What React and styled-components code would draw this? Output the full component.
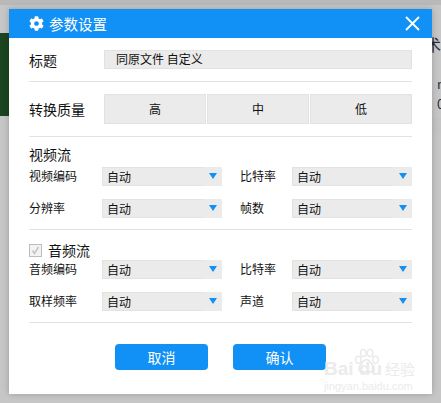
import React from "react";
import styled, { createGlobalStyle } from "styled-components";
import { FaCog } from "react-icons/fa";

const Global = createGlobalStyle`
  html, body { margin: 0; padding: 0; }
  body { font-family: "Noto Sans CJK SC", "Noto Sans", sans-serif; color: #111; }
`;

const Page = styled.div`
  position: relative;
  width: 441px;
  height: 403px;
  overflow: hidden;
  box-sizing: border-box;
  padding: 9px 0 0 9px;
  background:
    linear-gradient(#1b4420, #1b4420) 0 33px / 9px 83px no-repeat,
    linear-gradient(#c4c4c4, #c4c4c4) 432px 118px / 9px 17px no-repeat,
    linear-gradient(#b9b9b9 0, #b9b9b9 5px, #c6c6c6 5px, #c6c6c6 100%);
`;

const Ghost = styled.span`
  position: absolute;
  left: ${(p) => p.$left}px;
  top: ${(p) => p.$top}px;
  font-size: ${(p) => p.$size}px;
  line-height: 1;
  color: #2a2a3a;
`;

const Dialog = styled.div`
  position: relative;
  width: 423px;
  height: 385px;
  background: #fff;
  box-shadow: 0 0 6px rgba(0, 0, 0, 0.22);
`;

const Header = styled.header`
  height: 29px;
  background: #1190f5;
  display: flex;
  align-items: center;
  padding: 0 12px 0 20px;
  color: #fff;
`;

const Title = styled.h1`
  margin: 0 0 0 5px;
  font-size: 14.5px;
  font-weight: 400;
  line-height: 29px;
  flex: 1;
`;

const Close = styled.svg`
  width: 15px;
  height: 15px;
  display: block;
`;

const Body = styled.div`
  padding: 12px 20px 0 20px;
`;

const TitleRow = styled.div`
  display: flex;
  align-items: center;
  height: 19px;
`;

const RowLabel = styled.span`
  font-size: 14px;
  line-height: 20px;
  width: 75px;
  flex: none;
`;

const TitleField = styled.div`
  flex: 1;
  height: 19px;
  box-sizing: border-box;
  background: #ebebeb;
  border: 1px solid #e2e2e2;
  font-size: 12px;
  line-height: 16px;
  padding-left: 11px;
  color: #111;
`;

const Divider = styled.div`
  height: 1px;
  background: #e2e2e2;
  margin: ${(p) => p.$top}px 0 ${(p) => p.$bottom}px;
`;

const QualityRow = styled.div`
  display: flex;
  align-items: center;
  height: 30px;
`;

const Segments = styled.div`
  flex: 1;
  display: grid;
  grid-template-columns: repeat(3, 1fr);
  gap: 1px;
  height: 30px;
`;

const Segment = styled.div`
  background: #ebebeb;
  border: 1px solid #e2e2e2;
  font-size: 12px;
  line-height: 28px;
  text-align: center;
  color: #111;
`;

const SectionTitle = styled.div`
  font-size: 14px;
  line-height: 18px;
  height: 20px;
  display: flex;
  align-items: center;
`;

const CheckBox = styled.span`
  width: 13px;
  height: 13px;
  box-sizing: border-box;
  border: 1px solid #bdbdbd;
  background: #f3f3f3;
  margin-right: 6px;
  display: flex;
  align-items: center;
  justify-content: center;
`;

const Grid = styled.div`
  display: grid;
  grid-template-columns: 73px 120px 70px 120px;
  row-gap: 13px;
  margin-top: ${(p) => p.$top}px;
`;

const FieldLabel = styled.span`
  font-size: 12px;
  line-height: 18px;
  color: #111;
  padding-left: ${(p) => (p.$second ? "18px" : "0")};
`;

const Select = styled.div`
  height: 19px;
  background: #ebebeb;
  display: flex;
  align-items: stretch;
`;

const SelectText = styled.div`
  flex: 1;
  box-sizing: border-box;
  border: 1px solid #e2e2e2;
  border-right: none;
  font-size: 12px;
  line-height: 17px;
  padding-left: 4px;
  color: #111;
`;

const Arrow = styled.div`
  width: 19px;
  flex: none;
  display: flex;
  justify-content: center;
  padding-top: 6px;
  box-sizing: border-box;
`;

const Triangle = styled.span`
  width: 0;
  height: 0;
  border-left: 4.5px solid transparent;
  border-right: 4.5px solid transparent;
  border-top: 6px solid #1190f5;
`;

const Actions = styled.div`
  display: flex;
  gap: 25px;
  padding-left: 86px;
`;

const Button = styled.button`
  width: 93px;
  height: 26px;
  padding: 0;
  border: none;
  border-radius: 4px;
  background: #1190f5;
  color: #fff;
  font-family: inherit;
  font-size: 14px;
  line-height: 26px;
`;

const Watermark = styled.div`
  position: absolute;
  left: 315px;
  top: 350px;
  width: 100px;
  height: 34px;
  color: #ebebeb;
  font-family: "Liberation Sans", sans-serif;
`;

const WatermarkBrand = styled.div`
  display: flex;
  align-items: center;
  font-size: 19px;
  font-weight: 700;
  line-height: 20px;
  gap: 3px;
`;

const WatermarkCjk = styled.span`
  font-family: "Noto Sans CJK SC", sans-serif;
  font-size: 15px;
  font-weight: 400;
`;

const WatermarkUrl = styled.div`
  font-size: 11px;
  line-height: 12px;
  margin-top: 1px;
  white-space: nowrap;
`;

const Paw = styled.svg`
  position: absolute;
  left: 29px;
  top: -11px;
  width: 27px;
  height: 27px;
`;

function Field({ label, second }) {
  return (
    <>
      <FieldLabel $second={second}>{label}</FieldLabel>
      <Select>
        <SelectText>自动</SelectText>
        <Arrow><Triangle /></Arrow>
      </Select>
    </>
  );
}

export default function App() {
  return (
    <Page>
      <Global />
      <Ghost $left={425} $top={36} $size={16}>术</Ghost>
      <Ghost $left={437} $top={77} $size={13}>n</Ghost>
      <Ghost $left={437} $top={97} $size={13}>0</Ghost>
      <Dialog>
        <Header>
          <FaCog size={15} />
          <Title>参数设置</Title>
          <Close viewBox="0 0 15 15">
            <path d="M1 1 L14 14 M14 1 L1 14" stroke="#fff" strokeWidth="1.8" fill="none" />
          </Close>
        </Header>
        <Body>
          <TitleRow>
            <RowLabel>标题</RowLabel>
            <TitleField>同原文件 自定义</TitleField>
          </TitleRow>
          <Divider $top={12} $bottom={12} />
          <QualityRow>
            <RowLabel>转换质量</RowLabel>
            <Segments>
              <Segment>高</Segment>
              <Segment>中</Segment>
              <Segment>低</Segment>
            </Segments>
          </QualityRow>
          <Divider $top={12} $bottom={7} />
          <SectionTitle>视频流</SectionTitle>
          <Grid $top={3}>
            <Field label="视频编码" />
            <Field label="比特率" second />
            <Field label="分辨率" />
            <Field label="帧数" second />
          </Grid>
          <Divider $top={11} $bottom={10} />
          <SectionTitle>
            <CheckBox>
              <svg width="9" height="9" viewBox="0 0 9 9">
                <path d="M1.5 4.5 L3.5 7.5 L7.5 1" stroke="#c4c4c4" strokeWidth="1.5" fill="none" />
              </svg>
            </CheckBox>
            音频流
          </SectionTitle>
          <Grid $top={0}>
            <Field label="音频编码" />
            <Field label="比特率" second />
            <Field label="取样频率" />
            <Field label="声道" second />
          </Grid>
          <Divider $top={11} $bottom={21} />
          <Actions>
            <Button>取消</Button>
            <Button>确认</Button>
          </Actions>
        </Body>
        <Watermark>
          <Paw viewBox="0 0 30 30">
            <g fill="none" stroke="#e8e8e8" strokeWidth="1.5">
              <ellipse cx="6" cy="13" rx="3" ry="4" />
              <ellipse cx="11.5" cy="5.5" rx="3" ry="4" />
              <ellipse cx="19" cy="5.5" rx="3" ry="4" />
              <ellipse cx="25" cy="13" rx="3" ry="4" />
              <path d="M15 13 C11 13 9 18 7 21 C5 25 9 28 15 26 C21 28 25 25 23 21 C21 18 19 13 15 13 Z" />
            </g>
          </Paw>
          <WatermarkBrand>Bai du <WatermarkCjk>经验</WatermarkCjk></WatermarkBrand>
          <WatermarkUrl>jingyan.baidu.com</WatermarkUrl>
        </Watermark>
      </Dialog>
    </Page>
  );
}
